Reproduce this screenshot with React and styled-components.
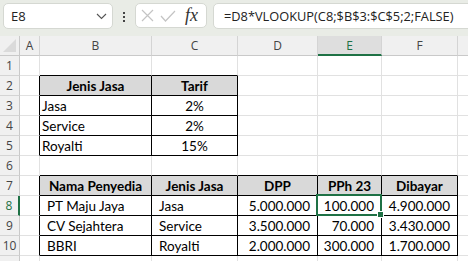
import React from "react";
import styled, { createGlobalStyle } from "styled-components";

const GlobalStyle = createGlobalStyle`
  html, body {
    margin: 0;
    padding: 0;
    background: #ffffff;
    overflow: hidden;
  }
`;

const COLS = ["", "A", "B", "C", "D", "E", "F", ""];
const ROWS = [1, 2, 3, 4, 5, 6, 7, 8, 9, 10, 11];

const tables = [
  { r1: 2, r2: 5, c1: 2, c2: 3 },
  { r1: 7, r2: 10, c1: 2, c2: 6 },
];

const cells = {
  "2-2": { text: "Jenis Jasa", head: true },
  "2-3": { text: "Tarif", head: true },
  "3-2": { text: "Jasa" },
  "3-3": { text: "2%", align: "center" },
  "4-2": { text: "Service" },
  "4-3": { text: "2%", align: "center" },
  "5-2": { text: "Royalti" },
  "5-3": { text: "15%", align: "center" },
  "7-2": { text: "Nama Penyedia", head: true },
  "7-3": { text: "Jenis Jasa", head: true },
  "7-4": { text: "DPP", head: true },
  "7-5": { text: "PPh 23", head: true },
  "7-6": { text: "Dibayar", head: true },
  "8-2": { text: "PT Maju Jaya", indent: true },
  "8-3": { text: "Jasa", indent: true },
  "8-4": { text: "5.000.000", align: "right" },
  "8-5": { text: "100.000", align: "right" },
  "8-6": { text: "4.900.000", align: "right" },
  "9-2": { text: "CV Sejahtera", indent: true },
  "9-3": { text: "Service", indent: true },
  "9-4": { text: "3.500.000", align: "right" },
  "9-5": { text: "70.000", align: "right" },
  "9-6": { text: "3.430.000", align: "right" },
  "10-2": { text: "BBRI", indent: true },
  "10-3": { text: "Royalti", indent: true },
  "10-4": { text: "2.000.000", align: "right" },
  "10-5": { text: "300.000", align: "right" },
  "10-6": { text: "1.700.000", align: "right" },
};

const inTable = (r, c) =>
  tables.some((t) => r >= t.r1 && r <= t.r2 && c >= t.c1 && c <= t.c2);

export default function App() {
  return (
    <>
      <GlobalStyle />
      <FormulaBar>
        <NameBox>
          <span>E8</span>
          <svg width="11" height="7" viewBox="0 0 11 7">
            <path d="M1 1 L5.5 5.5 L10 1" fill="none" stroke="#555" strokeWidth="1.1" />
          </svg>
        </NameBox>
        <Dots>
          <i />
          <i />
          <i />
        </Dots>
        <FxBox>
          <svg width="13" height="13" viewBox="0 0 13 13">
            <path d="M1 1 L12 12 M12 1 L1 12" stroke="#c4c4c4" strokeWidth="1.2" />
          </svg>
          <svg width="16" height="12" viewBox="0 0 16 12">
            <path d="M1 6 L5.5 11 L15 1" fill="none" stroke="#c4c4c4" strokeWidth="1.2" />
          </svg>
          <Fx>fx</Fx>
        </FxBox>
        <FormulaInput>=D8*VLOOKUP(C8;$B$3:$C$5;2;FALSE)</FormulaInput>
      </FormulaBar>

      <Sheet>
        {COLS.map((label, c) =>
          c === 0 ? (
            <Corner key="corner">
              <svg width="13" height="13" viewBox="0 0 13 13">
                <path d="M13 0 L13 13 L0 13 Z" fill="#dadada" />
              </svg>
            </Corner>
          ) : (
            <ColHead key={"h" + c} $active={label === "E"} $last={c === COLS.length - 1}>
              {label}
            </ColHead>
          )
        )}
        {ROWS.map((r) =>
          COLS.map((_, c) => {
            if (c === 0) {
              // row 11 is only a sliver at the bottom edge, its number is hidden
              return (
                <RowHead key={r + "-0"} $active={r === 8}>
                  {r < 11 ? r : ""}
                </RowHead>
              );
            }
            const cell = cells[r + "-" + c];
            const boxed = inTable(r, c);
            return (
              <Cell
                key={r + "-" + c}
                $right={boxed || inTable(r, c + 1)}
                $bottom={boxed || inTable(r + 1, c)}
                $head={cell && cell.head}
                $align={cell ? cell.align || (cell.head ? "center" : "left") : "left"}
                $indent={cell && cell.indent}
                $last={c === COLS.length - 1}
              >
                {cell && cell.text}
                {r === 8 && c === 5 && (
                  <>
                    <Selection />
                    <Handle />
                  </>
                )}
              </Cell>
            );
          })
        )}
      </Sheet>
    </>
  );
}

const FormulaBar = styled.div`
  display: flex;
  align-items: flex-start;
  height: 36px;
  padding: 3px 0 0 3px;
  box-sizing: border-box;
  background: #e9ece6;
  font-family: "Open Sans", "Noto Sans", sans-serif;
  color: #222;
`;

const NameBox = styled.div`
  display: flex;
  align-items: center;
  justify-content: space-between;
  width: 110px;
  height: 26px;
  box-sizing: border-box;
  padding: 0 5px 0 7px;
  background: #ffffff;
  border: 1px solid #d5d8d2;
  border-radius: 5px;
  font-size: 13px;
`;

const Dots = styled.div`
  display: flex;
  flex-direction: column;
  gap: 2px;
  margin: 9px 10px 0 10px;

  i {
    display: block;
    width: 2px;
    height: 2px;
    background: #444;
  }
`;

const FxBox = styled.div`
  display: flex;
  align-items: center;
  gap: 6px;
  width: 72px;
  height: 25px;
  box-sizing: border-box;
  padding: 0 5px;
  background: #ffffff;
  border: 1px solid #d5d8d2;
  border-radius: 5px;
`;

const Fx = styled.span`
  margin-left: 3px;
  font-family: "Liberation Serif", "DejaVu Serif", serif;
  font-style: italic;
  font-size: 18px;
  color: #333;
`;

const FormulaInput = styled.div`
  flex: 1;
  display: flex;
  align-items: center;
  height: 26px;
  margin-left: 6px;
  margin-right: -8px;
  padding-left: 10px;
  box-sizing: border-box;
  background: #ffffff;
  border: 1px solid #d5d8d2;
  border-radius: 5px;
  font-size: 12.8px;
  white-space: nowrap;
  overflow: hidden;
`;

const Sheet = styled.div`
  display: grid;
  grid-template-columns: 20px 20px 112px 86px 80px 64px 76px 1fr;
  grid-auto-rows: 20px;
`;

const Corner = styled.div`
  display: flex;
  align-items: flex-end;
  justify-content: flex-end;
  padding: 0 3px 3px 0;
  box-sizing: border-box;
  background: #f0f0f0;
  border-right: 1px solid #c9c9c9;
  border-bottom: 1px solid #c9c9c9;
`;

const ColHead = styled.div`
  display: flex;
  align-items: center;
  justify-content: center;
  box-sizing: border-box;
  background: ${(p) => (p.$active ? "#dedede" : "#f0f0f0")};
  border-right: ${(p) => (p.$last ? "none" : "1px solid #d4d4d4")};
  border-bottom: ${(p) => (p.$active ? "2px solid #1e7145" : "1px solid #c9c9c9")};
  font-family: "Open Sans", "Noto Sans", sans-serif;
  font-size: 12px;
  color: ${(p) => (p.$active ? "#1e7145" : "#444")};
`;

const RowHead = styled.div`
  display: flex;
  align-items: center;
  justify-content: center;
  box-sizing: border-box;
  background: #f0f0f0;
  border-right: ${(p) => (p.$active ? "2px solid #1e7145" : "1px solid #c9c9c9")};
  border-bottom: 1px solid #d4d4d4;
  font-family: "Open Sans", "Noto Sans", sans-serif;
  font-size: 12px;
  color: ${(p) => (p.$active ? "#1e7145" : "#444")};
`;

const Cell = styled.div`
  position: relative;
  display: flex;
  align-items: flex-end;
  justify-content: ${(p) =>
    p.$align === "center" ? "center" : p.$align === "right" ? "flex-end" : "flex-start"};
  box-sizing: border-box;
  padding: 0 ${(p) => (p.$align === "right" ? "7px" : "2px")} 1px
    ${(p) => (p.$indent ? "7px" : "2px")};
  background: ${(p) => (p.$head ? "#d9d9d9" : "#ffffff")};
  border-right: ${(p) => (p.$last ? "none" : p.$right ? "1px solid #000" : "1px solid #e1e1e1")};
  border-bottom: 1px solid ${(p) => (p.$bottom ? "#000" : "#e1e1e1")};
  font-family: Lato, "Open Sans", sans-serif;
  font-size: 13.5px;
  font-weight: ${(p) => (p.$head ? 700 : 400)};
  color: #000;
  white-space: nowrap;
`;

const Selection = styled.div`
  position: absolute;
  top: -2px;
  left: -2px;
  right: -1px;
  bottom: -1px;
  border: 2px solid #1e7145;
  z-index: 2;
`;

const Handle = styled.div`
  position: absolute;
  right: -2px;
  bottom: -2px;
  width: 5px;
  height: 5px;
  background: #1e7145;
  box-shadow: 0 0 0 1px #ffffff;
  z-index: 3;
`;
